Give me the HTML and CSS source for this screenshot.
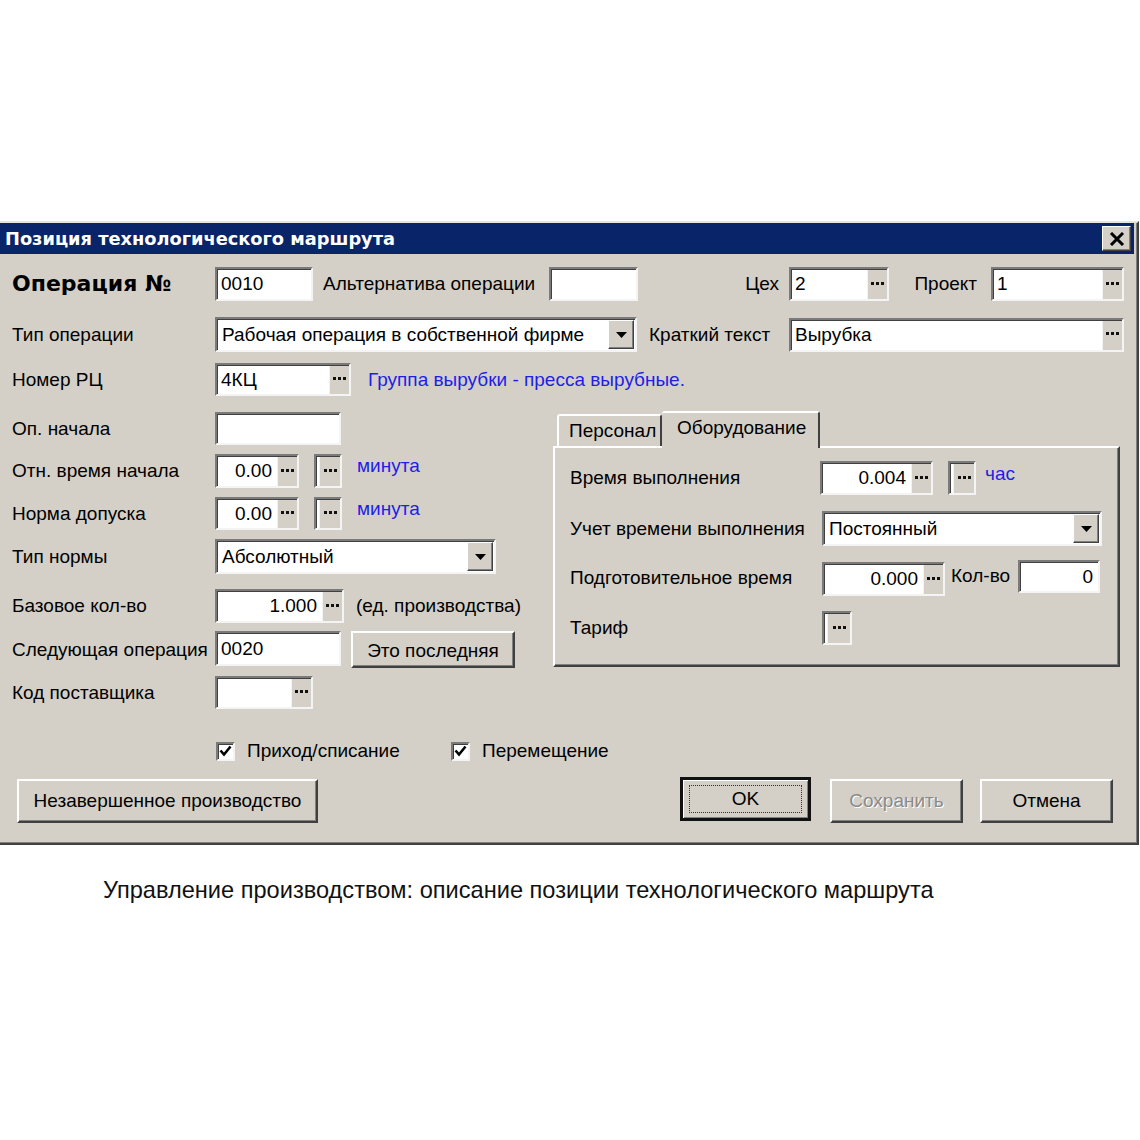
FILE: index.html
```html
<!DOCTYPE html>
<html lang="ru">
<head>
<meta charset="utf-8">
<title>Позиция технологического маршрута</title>
<link rel="stylesheet" href="styles.css">
</head>
<body>
<div class="page">
  <div class="dialog">
    <div class="titlebar">
      <span class="title">Позиция технологического маршрута</span>
      <span class="close"><svg width="16" height="14" viewBox="0 0 16 14"><path d="M2 1 L14 13 M14 1 L2 13" stroke="#000" stroke-width="3"/></svg></span>
    </div>
    <div class="content">
      <div class="row r1">
        <div class="lbl lbl-main">Операция №</div>
        <div class="field w98"><span class="val">0010</span></div>
        <div class="lbl alt-label">Альтернатива операции</div>
        <div class="field w89"></div>
        <div class="lbl right-lbl ceh-lbl">Цех</div>
        <div class="field w100"><span class="val">2</span><span class="ell"><svg width="13" height="4" viewBox="0 0 13 4"><rect x="0" y="0" width="3" height="3"/><rect x="5" y="0" width="3" height="3"/><rect x="10" y="0" width="3" height="3"/></svg></span></div>
        <div class="lbl right-lbl proj-lbl">Проект</div>
        <div class="field w133"><span class="val">1</span><span class="ell"><svg width="13" height="4" viewBox="0 0 13 4"><rect x="0" y="0" width="3" height="3"/><rect x="5" y="0" width="3" height="3"/><rect x="10" y="0" width="3" height="3"/></svg></span></div>
      </div>
      <div class="row r2">
        <div class="lbl">Тип операции</div>
        <div class="field select w422"><span class="val">Рабочая операция в собственной фирме</span><span class="drop"><svg width="11" height="6" viewBox="0 0 11 6"><path d="M0 0 H11 L5.5 6 Z"/></svg></span></div>
        <div class="lbl short-lbl">Краткий текст</div>
        <div class="field grow"><span class="val">Вырубка</span><span class="ell"><svg width="13" height="4" viewBox="0 0 13 4"><rect x="0" y="0" width="3" height="3"/><rect x="5" y="0" width="3" height="3"/><rect x="10" y="0" width="3" height="3"/></svg></span></div>
      </div>
      <div class="row r3">
        <div class="lbl">Номер РЦ</div>
        <div class="field w136"><span class="val">4КЦ</span><span class="ell"><svg width="13" height="4" viewBox="0 0 13 4"><rect x="0" y="0" width="3" height="3"/><rect x="5" y="0" width="3" height="3"/><rect x="10" y="0" width="3" height="3"/></svg></span></div>
        <div class="blue group-text">Группа вырубки - пресса вырубные.</div>
      </div>

      <div class="lower">
        <div class="left-col">
          <div class="row lr1">
            <div class="lbl">Оп. начала</div>
            <div class="field w126"></div>
          </div>
          <div class="row lr2">
            <div class="lbl">Отн. время начала</div>
            <div class="field w84 num"><span class="val">0.00</span><span class="ell"><svg width="13" height="4" viewBox="0 0 13 4"><rect x="0" y="0" width="3" height="3"/><rect x="5" y="0" width="3" height="3"/><rect x="10" y="0" width="3" height="3"/></svg></span></div>
            <div class="field mini"><span class="ell"><svg width="13" height="4" viewBox="0 0 13 4"><rect x="0" y="0" width="3" height="3"/><rect x="5" y="0" width="3" height="3"/><rect x="10" y="0" width="3" height="3"/></svg></span></div>
            <div class="blue unit">минута</div>
          </div>
          <div class="row lr3">
            <div class="lbl">Норма допуска</div>
            <div class="field w84 num"><span class="val">0.00</span><span class="ell"><svg width="13" height="4" viewBox="0 0 13 4"><rect x="0" y="0" width="3" height="3"/><rect x="5" y="0" width="3" height="3"/><rect x="10" y="0" width="3" height="3"/></svg></span></div>
            <div class="field mini"><span class="ell"><svg width="13" height="4" viewBox="0 0 13 4"><rect x="0" y="0" width="3" height="3"/><rect x="5" y="0" width="3" height="3"/><rect x="10" y="0" width="3" height="3"/></svg></span></div>
            <div class="blue unit">минута</div>
          </div>
          <div class="row lr4">
            <div class="lbl">Тип нормы</div>
            <div class="field select w281"><span class="val">Абсолютный</span><span class="drop"><svg width="11" height="6" viewBox="0 0 11 6"><path d="M0 0 H11 L5.5 6 Z"/></svg></span></div>
          </div>
          <div class="row lr5">
            <div class="lbl">Базовое кол-во</div>
            <div class="field w129 num"><span class="val">1.000</span><span class="ell"><svg width="13" height="4" viewBox="0 0 13 4"><rect x="0" y="0" width="3" height="3"/><rect x="5" y="0" width="3" height="3"/><rect x="10" y="0" width="3" height="3"/></svg></span></div>
            <div class="lbl after">(ед. производства)</div>
          </div>
          <div class="row lr6">
            <div class="lbl">Следующая операция</div>
            <div class="field w126"><span class="val">0020</span></div>
            <div class="btn last-btn">Это последняя</div>
          </div>
          <div class="row lr7">
            <div class="lbl">Код поставщика</div>
            <div class="field w98"><span class="val"></span><span class="ell"><svg width="13" height="4" viewBox="0 0 13 4"><rect x="0" y="0" width="3" height="3"/><rect x="5" y="0" width="3" height="3"/><rect x="10" y="0" width="3" height="3"/></svg></span></div>
          </div>
        </div>

        <div class="tabs">
          <div class="tab-strip">
            <div class="tab">Персонал</div>
            <div class="tab active">Оборудование</div>
          </div>
          <div class="tab-panel">
            <div class="row pr1">
              <div class="plbl">Время выполнения</div>
              <div class="field w113 num first"><span class="val">0.004</span><span class="ell"><svg width="13" height="4" viewBox="0 0 13 4"><rect x="0" y="0" width="3" height="3"/><rect x="5" y="0" width="3" height="3"/><rect x="10" y="0" width="3" height="3"/></svg></span></div>
              <div class="field mini mini-hr"><span class="ell"><svg width="13" height="4" viewBox="0 0 13 4"><rect x="0" y="0" width="3" height="3"/><rect x="5" y="0" width="3" height="3"/><rect x="10" y="0" width="3" height="3"/></svg></span></div>
              <div class="blue unit hr">час</div>
            </div>
            <div class="row pr2">
              <div class="plbl">Учет времени выполнения</div>
              <div class="field select w280"><span class="val">Постоянный</span><span class="drop"><svg width="11" height="6" viewBox="0 0 11 6"><path d="M0 0 H11 L5.5 6 Z"/></svg></span></div>
            </div>
            <div class="row pr3">
              <div class="plbl">Подготовительное время</div>
              <div class="field w123 num prep"><span class="val">0.000</span><span class="ell"><svg width="13" height="4" viewBox="0 0 13 4"><rect x="0" y="0" width="3" height="3"/><rect x="5" y="0" width="3" height="3"/><rect x="10" y="0" width="3" height="3"/></svg></span></div>
              <div class="lbl qty-lbl">Кол-во</div>
              <div class="field w82 num qty"><span class="val">0</span></div>
            </div>
            <div class="row pr4">
              <div class="plbl">Тариф</div>
              <div class="field mini tariff"><span class="ell"><svg width="13" height="4" viewBox="0 0 13 4"><rect x="0" y="0" width="3" height="3"/><rect x="5" y="0" width="3" height="3"/><rect x="10" y="0" width="3" height="3"/></svg></span></div>
            </div>
          </div>
        </div>
      </div>

      <div class="row checks">
        <span class="check"><svg width="13" height="12" viewBox="0 0 13 12"><path d="M1.5 5.5 L5 9.5 L11.5 1.5" fill="none" stroke="#000" stroke-width="2.6"/></svg></span>
        <span class="lbl check-lbl first-check">Приход/списание</span>
        <span class="check"><svg width="13" height="12" viewBox="0 0 13 12"><path d="M1.5 5.5 L5 9.5 L11.5 1.5" fill="none" stroke="#000" stroke-width="2.6"/></svg></span>
        <span class="lbl check-lbl">Перемещение</span>
      </div>

      <div class="row buttons">
        <div class="btn wip-btn">Незавершенное производство</div>
        <div class="btn default ok-btn"><span class="focus">OK</span></div>
        <div class="btn disabled save-btn">Сохранить</div>
        <div class="btn cancel-btn">Отмена</div>
      </div>
    </div>
  </div>
  <p class="caption">Управление производством: описание позиции технологического маршрута</p>
</div>
</body>
</html>
```

FILE: styles.css
```css
html, body {
  margin: 0;
  padding: 0;
  background: #ffffff;
}

.page {
  padding-top: 221px;
  font-family: "Liberation Sans", Arial, sans-serif;
}

.dialog {
  width: 1139px;
  box-sizing: border-box;
  background: #d4d0c8;
  border-top: 2px solid #e6e4de;
  border-right: 2px solid #404040;
  border-bottom: 2px solid #404040;
  box-shadow: inset -1px -1px 0 #808080;
  color: #000;
  font-size: 19px;
}

.titlebar {
  height: 31px;
  margin-right: 3px;
  background: #0a246a;
  display: flex;
  align-items: center;
  justify-content: space-between;
}

.title {
  color: #fff;
  font-family: "DejaVu Sans", Verdana, sans-serif;
  font-weight: bold;
  font-size: 17.8px;
  padding-left: 5px;
}

.close {
  width: 29px;
  height: 25px;
  box-sizing: border-box;
  margin-right: 3px;
  background: #d4d0c8;
  border: 1px solid;
  border-color: #fff #404040 #404040 #fff;
  box-shadow: inset -1px -1px 0 #808080;
  display: flex;
  align-items: center;
  justify-content: center;
}

.content {
  padding: 13px 13px 20px 12px;
}

.row {
  display: flex;
  align-items: center;
}

.lbl {
  white-space: nowrap;
}

.row > .lbl:first-child {
  width: 203px;
  flex: none;
}

.lbl-main {
  font-family: "DejaVu Sans", Verdana, sans-serif;
  font-weight: bold;
  font-size: 22px;
  align-self: flex-start;
  padding-top: 4px;
}

/* text fields */
.field {
  box-sizing: border-box;
  background: #fff;
  border: 2px solid;
  border-color: #7a7a7a #f4f4f4 #f4f4f4 #7a7a7a;
  box-shadow: inset 1px 1px 0 #404040;
  display: flex;
  align-items: center;
  height: 34px;
  flex: none;
}

.val {
  flex: 1;
  padding-left: 4px;
  white-space: nowrap;
  overflow: hidden;
}

.num .val {
  text-align: right;
  padding-right: 5px;
}

.ell {
  width: 19px;
  align-self: stretch;
  margin: 1px 0 0 0;
  background: #d4d0c8;
  border-left: 1px solid #f2f2f2;
  display: flex;
  align-items: center;
  justify-content: center;
  flex: none;
}

.ell svg {
  fill: #111;
  margin-top: -2px;
}

.select .val {
  padding-left: 5px;
}

.drop {
  width: 26px;
  align-self: stretch;
  margin: 1px 1px 1px 0;
  box-sizing: border-box;
  background: #d4d0c8;
  border: 1px solid;
  border-color: #fff #404040 #404040 #fff;
  box-shadow: inset -1px -1px 0 #808080;
  display: flex;
  align-items: center;
  justify-content: center;
  flex: none;
}

.drop svg {
  fill: #000;
}

.w98 { width: 98px; }
.w89 { width: 89px; }
.w100 { width: 100px; }
.w133 { width: 133px; }
.w422 { width: 422px; height: 35px; }
.w136 { width: 136px; height: 33px; }
.w126 { width: 126px; }
.w84 { width: 84px; }
.w281 { width: 281px; height: 35px; }
.w129 { width: 129px; }
.w113 { width: 113px; }
.w280 { width: 280px; height: 35px; }
.w123 { width: 123px; }
.w82 { width: 82px; height: 33px; }
.grow { flex: 1; }

.mini {
  width: 28px;
  justify-content: flex-end;
}

.mini .ell {
  width: 20px;
}

/* row 1 */
.r1 { height: 34px; }

.alt-label {
  width: 236px;
  padding-left: 10px;
  box-sizing: border-box;
}

.right-lbl {
  text-align: right;
  box-sizing: border-box;
}

.ceh-lbl {
  flex: 1;
  padding-right: 10px;
}

.proj-lbl {
  width: 102px;
  padding-right: 14px;
}

/* row 2 */
.r2 {
  height: 35px;
  margin-top: 16px;
}

.short-lbl {
  width: 152px;
  padding-left: 12px;
  box-sizing: border-box;
}

/* row 3 */
.r3 {
  height: 33px;
  margin-top: 11px;
}

.blue {
  color: #1e1ee6;
  white-space: nowrap;
}

.group-text {
  margin-left: 17px;
}

/* lower area */
.lower {
  display: flex;
  margin-top: 15px;
}

.left-col {
  width: 541px;
  flex: none;
  padding-top: 1px;
}

.lr1 { height: 33px; }
.lr1 .field { height: 33px; }
.lr2 { height: 34px; margin-top: 9px; }
.lr3 { height: 33px; margin-top: 9px; }
.lr3 .field { height: 33px; }
.lr4 { height: 35px; margin-top: 9px; }
.lr5 { height: 34px; margin-top: 15px; }
.lr6 { height: 37px; margin-top: 8px; }
.lr6 .field { height: 35px; align-self: flex-start; }
.lr7 { height: 33px; margin-top: 8px; }
.lr7 .field { height: 33px; }

.lr2 .mini, .lr3 .mini {
  margin-left: 15px;
}

.unit {
  align-self: flex-start;
  margin-top: 1px;
  margin-left: 15px;
}

.after {
  margin-left: 12px;
}

.btn {
  box-sizing: border-box;
  background: #d4d0c8;
  border: 2px solid;
  border-color: #fff #404040 #404040 #fff;
  box-shadow: inset -1px -1px 0 #808080;
  display: flex;
  align-items: center;
  justify-content: center;
  white-space: nowrap;
  flex: none;
}

.last-btn {
  width: 164px;
  height: 37px;
  margin-left: 10px;
  padding-top: 2px;
}

/* tabs */
.tabs {
  width: 567px;
  flex: none;
}

.tab-strip {
  display: flex;
  align-items: flex-end;
  height: 35px;
  padding-left: 4px;
}

.tab {
  box-sizing: border-box;
  height: 32px;
  border: 2px solid;
  border-bottom: none;
  border-color: #fff #404040 transparent #fff;
  border-radius: 3px 3px 0 0;
  padding: 0 0 0 10px;
  width: 105px;
  display: flex;
  align-items: center;
  white-space: nowrap;
}

.tab.active {
  height: 37px;
  width: 158px;
  margin-bottom: -2px;
  padding-left: 15px;
  padding-bottom: 6px;
  background: #d4d0c8;
  position: relative;
  z-index: 1;
  border-left: none;
}

.tab-panel {
  box-sizing: border-box;
  height: 221px;
  border: 2px solid;
  border-color: #fff #404040 #404040 #fff;
  box-shadow: inset -1px -1px 0 #808080;
  padding: 13px 0 0 15px;
}

.plbl {
  width: 250px;
  flex: none;
  white-space: nowrap;
}

.pr1 { height: 34px; }
.pr2 { height: 35px; margin-top: 16px; }
.pr2 .field { margin-left: 2px; }
.pr3 { height: 36px; margin-top: 14px; }
.pr3 .prep { margin-left: 2px; align-self: flex-end; }
.pr3 .qty { align-self: flex-start; }
.pr4 { height: 34px; margin-top: 15px; }

.mini-hr { margin-left: 15px; }
.unit.hr { margin-left: 9px; margin-top: 2px; }

.qty-lbl {
  margin-left: 6px;
  margin-right: 8px;
  margin-top: -4px;
}

.tariff {
  width: 30px;
  margin-left: 2px;
}

.tariff .ell {
  width: 22px;
}

/* checks */
.checks {
  margin-top: 31px;
  height: 22px;
  padding-left: 204px;
}

.check {
  width: 19px;
  height: 19px;
  box-sizing: border-box;
  background: #fff;
  border: 2px solid;
  border-color: #7a7a7a #f4f4f4 #f4f4f4 #7a7a7a;
  box-shadow: inset 1px 1px 0 #404040;
  display: flex;
  align-items: center;
  justify-content: center;
  flex: none;
}

.check-lbl {
  margin-left: 12px;
}

.first-check {
  width: 204px;
}

/* buttons */
.buttons {
  margin-top: 15px;
  height: 46px;
  margin-right: 11px;
}

.wip-btn {
  width: 301px;
  height: 44px;
  margin-left: 5px;
  align-self: flex-end;
}

.ok-btn {
  width: 131px;
  height: 44px;
  margin-left: auto;
  align-self: flex-start;
  border: 3px solid;
  border-color: #111 #111 #111 #111;
  box-shadow: inset 1px 1px 0 #fff, inset -1px -1px 0 #808080;
  padding: 5px 6px;
}

.focus {
  flex: 1;
  align-self: stretch;
  border: 1px dotted #333;
  display: flex;
  align-items: center;
  justify-content: center;
}

.save-btn {
  width: 133px;
  height: 44px;
  margin-left: 19px;
  align-self: flex-end;
  color: #8a8a8a;
  text-shadow: 1px 1px 0 #fff;
}

.cancel-btn {
  width: 133px;
  height: 44px;
  margin-left: 17px;
  align-self: flex-end;
}

.caption {
  margin: 31px 0 0 0;
  padding-left: 103px;
  font-size: 23.6px;
  line-height: 28px;
  color: #111;
}
```
